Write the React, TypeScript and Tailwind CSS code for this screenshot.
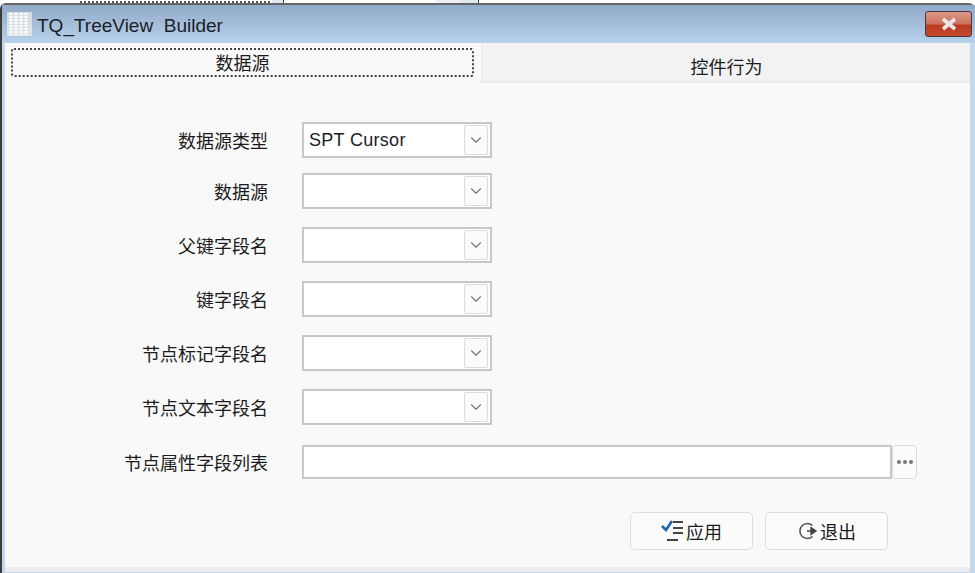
import { ChevronDown } from 'lucide-react';

const cjk = "font-['Liberation_Sans','Noto_Sans_CJK_SC',sans-serif]";

const fields = [
  { label: '数据源类型', value: 'SPT Cursor' },
  { label: '数据源', value: '' },
  { label: '父键字段名', value: '' },
  { label: '键字段名', value: '' },
  { label: '节点标记字段名', value: '' },
  { label: '节点文本字段名', value: '' },
];

function Combo({ value }: { value: string }) {
  return (
    <div className="flex h-[36px] w-[190px] items-center justify-between border-2 border-[#c6c6cc] bg-white pl-[5px] pr-[2px]">
      <span className="text-[18px] leading-none tracking-[0.3px] text-[#1c1c24]">{value}</span>
      <div className="flex h-[30px] w-[24px] items-center justify-center rounded-[2px] border border-[#dcdcdc] bg-[#fbfbfb]">
        <ChevronDown size={18} strokeWidth={1.5} className="text-[#777]" />
      </div>
    </div>
  );
}

function ApplyIcon() {
  return (
    <svg width="23" height="22" viewBox="0 0 23 22" className="mr-[2px]">
      <path d="M1 6l4 4 6-9" fill="none" stroke="#1666b8" strokeWidth="2.6" />
      <path d="M12 2h10M12 8h10M12 13h10M6 20h11" stroke="#444" strokeWidth="2" />
    </svg>
  );
}

function ExitIcon() {
  return (
    <svg width="21" height="20" viewBox="0 0 21 20" className="mr-[2px]">
      <path d="M15.5 4.5A7.5 7.5 0 1 0 15.5 15.5" fill="none" stroke="#555" strokeWidth="1.6" />
      <path d="M10 10h5M14 6.5l5 3.5-5 3.5z" stroke="#444" fill="#444" strokeWidth="1.4" />
    </svg>
  );
}

export default function App() {
  return (
    <div className={`relative flex h-[573px] w-[975px] flex-col overflow-hidden bg-white ${cjk}`}>
      {/* sliver of the window behind */}
      <div className="flex h-[3px] shrink-0">
        <div className="ml-[80px] h-full w-[190px] border-b-2 border-dotted border-[#555]" />
        <div className="ml-[2px] h-full w-[11px] bg-[#dfe8f2]" />
        <div className="h-full w-px bg-[#444]" />
        <div className="ml-[152px] h-full w-[24px] bg-[#f0f0f0]" />
        <div className="h-full w-[18px] bg-[#dfe8f2]" />
        <div className="h-full w-px bg-[#444]" />
      </div>

      <div className="flex min-h-0 flex-1 flex-col rounded-t-[6px] border-l-2 border-t-2 border-l-[#3c3c3c] border-t-[#666] bg-[#c5d9ee]">
        <div className="flex h-[38px] shrink-0 items-center bg-gradient-to-b from-[#90abc9] to-[#b8d1ea] pl-[5px] pr-[3px]">
          <svg width="25" height="24" viewBox="0 0 25 24" className="shrink-0">
            <rect width="25" height="24" fill="#e8e8e8" opacity="0.8" />
            <path d="M4 1v22M9 1v22M14 1v22M19 1v22" stroke="#fff" strokeWidth="3" strokeDasharray="2 1" />
          </svg>
          <span className="ml-[5px] whitespace-pre pt-[2px] text-[19px] leading-none text-[#1c2028]">TQ_TreeView  Builder</span>
          <div className="ml-auto flex h-[26px] w-[47px] items-center justify-center rounded-[3px] border border-[#4a3040] bg-[linear-gradient(#dd9a8a,#c9705c_50%,#b93a1f_55%,#c4492c)]">
            <svg width="20" height="14" viewBox="0 0 20 14">
              <path d="M4 2l12 10M16 2L4 12" stroke="#e8e8e8" strokeWidth="3.6" />
            </svg>
          </div>
        </div>

        <div className="ml-[3px] mr-[5px] mb-[1px] flex min-h-0 flex-1 flex-col border-b-[5px] border-[#ececec] bg-[#f9f9f9]">
          <div className="flex h-[40px] shrink-0">
            <div className="ml-[6px] mt-[5px] flex h-[29px] w-[463px] items-center justify-center self-start rounded-[3px] border-2 border-dotted border-[#444] pt-[2px] text-[18px] leading-none text-[#1c1c1c]">
              数据源
            </div>
            <div className="ml-[7px] flex flex-1 items-center justify-center border-b-2 border-l-2 border-[#ececec] bg-[#f2f2f2] pt-[12px] text-[18px] leading-none text-[#1c1c1c]">
              控件行为
            </div>
          </div>

          <div className="flex flex-1 flex-col pl-[115px] pt-[39px]">
            <div className="flex flex-col gap-[18px]">
              {fields.map((f, i) => (
                <div key={f.label} className={i === 0 ? 'flex items-center -mb-[3px]' : 'flex items-center'}>
                  <span className="w-[148px] pt-[3px] text-right text-[18px] leading-none text-[#1c1c1c]">{f.label}</span>
                  <div className="ml-[34px]">
                    <Combo value={f.value} />
                  </div>
                </div>
              ))}
              <div className="mt-[2px] flex items-center">
                <span className="w-[148px] pt-[3px] text-right text-[18px] leading-none text-[#1c1c1c]">节点属性字段列表</span>
                <div className="ml-[34px] h-[34px] w-[590px] border-2 border-[#c6c6cc] bg-white" />
                <div className="flex h-[34px] w-[25px] items-center justify-center gap-[2px] rounded-[4px] border border-[#dcdcdc] bg-[#fbfbfb]">
                  <span className="h-[4px] w-[4px] rounded-full bg-[#777]" />
                  <span className="h-[4px] w-[4px] rounded-full bg-[#777]" />
                  <span className="h-[4px] w-[4px] rounded-full bg-[#777]" />
                </div>
              </div>
            </div>
            <div className="ml-[510px] mt-[33px] flex gap-[12px]">
              <button className="flex h-[38px] w-[123px] items-center justify-center rounded-[5px] border border-[#dcdcdc] bg-[#fbfbfb] text-[18px] text-[#1c1c1c]">
                <ApplyIcon />
                <span className="pt-[4px]">应用</span>
              </button>
              <button className="flex h-[38px] w-[123px] items-center justify-center rounded-[5px] border border-[#dcdcdc] bg-[#fbfbfb] text-[18px] text-[#1c1c1c]">
                <ExitIcon />
                <span className="pt-[4px]">退出</span>
              </button>
            </div>
          </div>
        </div>
      </div>
    </div>
  );
}
